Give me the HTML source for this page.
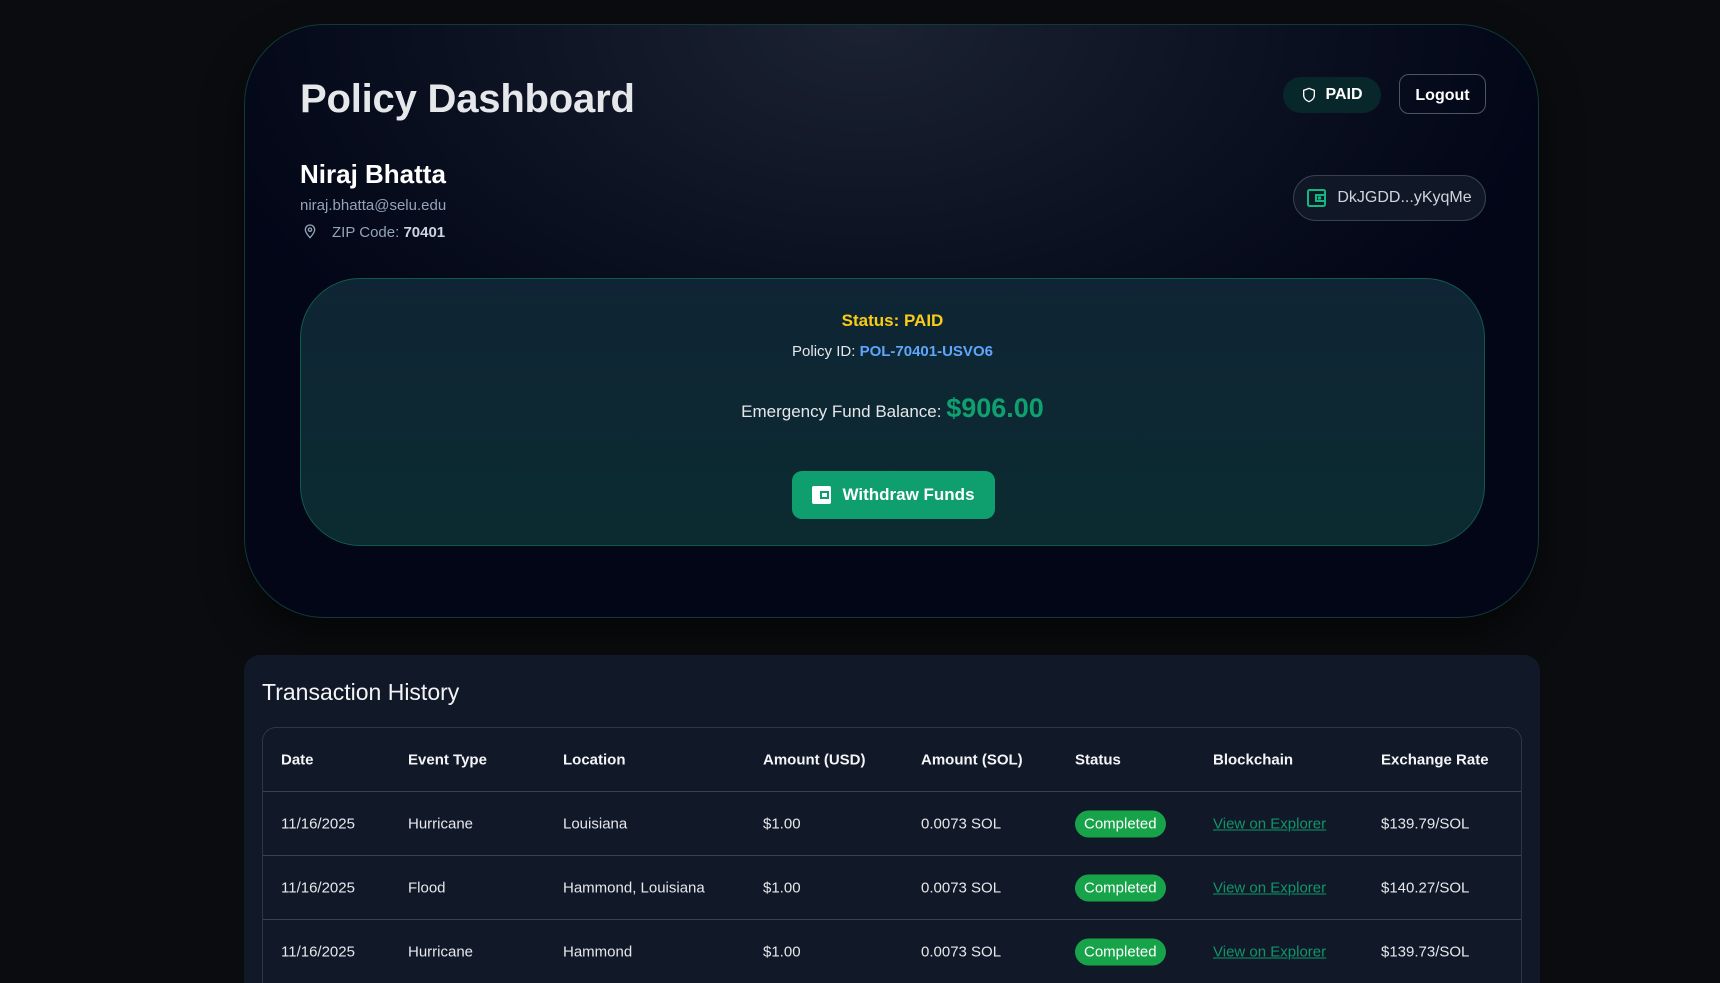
<!DOCTYPE html>
<html style="width:1720px;height:983px;overflow:hidden"><head><meta charset="utf-8"><style>
*{box-sizing:border-box;margin:0;padding:0}
body{width:1720px;height:983px;overflow:hidden;background:#0a0c0f;font-family:"Liberation Sans",sans-serif;color:#e5e7eb;position:relative}
.card{position:absolute;left:244px;top:24px;width:1295px;height:594px;border-radius:80px;border:1px solid #0f3a37;
background:radial-gradient(ellipse 700px 420px at 48% 0%,#1b2232 0%,#0c1222 55%,#020617 100%);box-shadow:0 20px 40px rgba(0,0,0,.5)}
.abs{position:absolute;white-space:nowrap}
h1{position:absolute;left:55px;top:52px;font-size:40px;font-weight:bold;color:#e5e7eb;letter-spacing:-.2px}
.name{left:55px;top:134px;font-size:26px;font-weight:bold;color:#fff}
.email{left:55px;top:172px;font-size:15px;color:#94a3b8}
.zip{left:55px;top:197px;font-size:15px;color:#94a3b8}
.zip b{color:#cbd5e1}
.pill{left:1038px;top:52px;width:98px;height:36px;border-radius:18px;background:#08272a;font-size:16px;font-weight:bold;color:#fff;display:flex;align-items:center;justify-content:center;gap:8px}
.logout{left:1154px;top:49px;width:87px;height:40px;border-radius:10px;border:1px solid #4b5563;font-size:16px;font-weight:bold;color:#fff;display:flex;align-items:center;justify-content:center;padding-top:3px}
.wallet{left:1048px;top:150px;width:193px;height:46px;border-radius:23px;border:1px solid #374151;background:#101827;font-size:16px;color:#d1d5db;display:flex;align-items:center;justify-content:center;gap:10px}
.panel{position:absolute;left:55px;top:253px;width:1185px;height:268px;border-radius:60px;border:1px solid #105a4b;background:linear-gradient(180deg,#0f2535 0%,#0b2b30 100%);text-align:center}
.btn{position:absolute;left:491px;top:192px;width:203px;height:48px;border-radius:10px;background:#0f9f6e;color:#fff;font-size:17px;font-weight:bold;display:flex;align-items:center;justify-content:center;gap:10px}
.tcard{position:absolute;left:244px;top:655px;width:1296px;height:328px;border-radius:16px 16px 0 0;background:#111827;overflow:hidden}
.tcard h2{position:absolute;left:18px;top:24px;font-size:23px;font-weight:normal;color:#f3f4f6}
.tbl{position:absolute;left:18px;top:72px;width:1260px;height:256px;border:1px solid #2f3746;border-bottom:none;border-radius:14px 14px 0 0;overflow:hidden}
.row{position:absolute;left:0;width:100%;height:64px;border-bottom:1px solid #3a4250;font-size:15px;color:#e5e7eb}
.row span{position:absolute;top:50%;transform:translateY(-50%);white-space:nowrap}
.hd span{font-weight:bold;color:#f3f4f6}
.badge{background:#16a34a;color:#fff;border-radius:14px;padding:5px 9px;font-size:15px}
.lnk{color:#10956a;text-decoration:underline}
</style></head><body>
<div class="card">
<h1>Policy Dashboard</h1>
<div class="abs name">Niraj Bhatta</div>
<div class="abs email">niraj.bhatta@selu.edu</div>
<div class="abs zip"><svg width="16" height="18" viewBox="0 0 24 24" fill="none" stroke="#94a3b8" stroke-width="2" style="vertical-align:-3px;margin-right:14px;margin-left:2px"><path d="M12 22s7-7 7-12a7 7 0 0 0-14 0c0 5 7 12 7 12z"/><circle cx="12" cy="10" r="2.5"/></svg>ZIP Code: <b>70401</b></div>
<div class="abs pill"><svg width="16" height="18" viewBox="0 0 24 24" fill="none" stroke="#fff" stroke-width="2"><path d="M12 2l8 3v7c0 5-4 8.5-8 10-4-1.5-8-5-8-10V5z"/></svg>PAID</div>
<div class="abs logout">Logout</div>
<div class="abs wallet"><svg width="20" height="18" viewBox="0 0 20 18" fill="none" stroke="#10b981" stroke-width="2"><rect x="1" y="1" width="17" height="16" rx="1.5"/><rect x="9" y="6" width="9" height="6"/><circle cx="12.5" cy="9" r="0.8" fill="#10b981"/></svg>DkJGDD...yKyqMe</div>
<div class="panel">
<div class="abs" style="left:0;width:100%;top:32px;font-size:17px;font-weight:bold;color:#facc15">Status: PAID</div>
<div class="abs" style="left:0;width:100%;top:64px;font-size:15px;color:#e5e7eb">Policy ID: <span style="color:#60a5fa;font-weight:bold">POL-70401-USVO6</span></div>
<div class="abs" style="left:0;width:100%;top:114px;font-size:17px;color:#e5e7eb">Emergency Fund Balance: <span style="color:#10a070;font-weight:bold;font-size:27px">$906.00</span></div>
<div class="btn"><svg width="20" height="18" viewBox="0 0 20 18"><rect x="0" y="0" width="19" height="18" rx="2" fill="#fff"/><rect x="8" y="5" width="9" height="8" fill="#0f9f6e"/><rect x="10" y="7" width="5" height="4" fill="#fff"/></svg>Withdraw Funds</div>
</div>
</div>
<div class="tcard">
<h2>Transaction History</h2>
<div class="tbl">
<div class="row hd" style="top:0"><span style="left:18px">Date</span><span style="left:145px">Event Type</span><span style="left:300px">Location</span><span style="left:500px">Amount (USD)</span><span style="left:658px">Amount (SOL)</span><span style="left:812px">Status</span><span style="left:950px">Blockchain</span><span style="left:1118px">Exchange Rate</span></div>
<div class="row" style="top:64px"><span style="left:18px">11/16/2025</span><span style="left:145px">Hurricane</span><span style="left:300px">Louisiana</span><span style="left:500px">$1.00</span><span style="left:658px">0.0073 SOL</span><span style="left:812px" class="badge">Completed</span><span style="left:950px" class="lnk">View on Explorer</span><span style="left:1118px">$139.79/SOL</span></div>
<div class="row" style="top:128px"><span style="left:18px">11/16/2025</span><span style="left:145px">Flood</span><span style="left:300px">Hammond, Louisiana</span><span style="left:500px">$1.00</span><span style="left:658px">0.0073 SOL</span><span style="left:812px" class="badge">Completed</span><span style="left:950px" class="lnk">View on Explorer</span><span style="left:1118px">$140.27/SOL</span></div>
<div class="row" style="top:192px;border-bottom:none"><span style="left:18px">11/16/2025</span><span style="left:145px">Hurricane</span><span style="left:300px">Hammond</span><span style="left:500px">$1.00</span><span style="left:658px">0.0073 SOL</span><span style="left:812px" class="badge">Completed</span><span style="left:950px" class="lnk">View on Explorer</span><span style="left:1118px">$139.73/SOL</span></div>
</div>
</div>
</body></html>
